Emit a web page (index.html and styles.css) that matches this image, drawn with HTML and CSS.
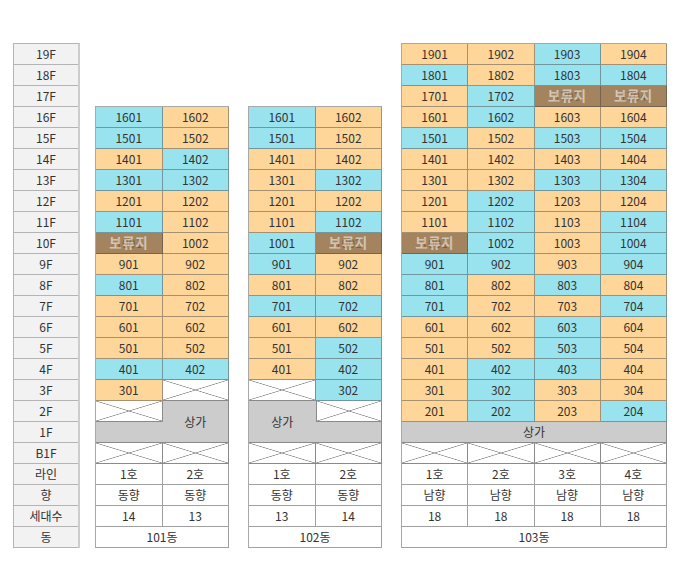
FILE: index.html
```html
<!DOCTYPE html>
<html lang="ko">
<head>
<meta charset="utf-8">
<title>동별 배치도</title>
<link rel="stylesheet" href="styles.css">
</head>
<body>
<div class="page">
  <div class="floors">
    <div class="f">19F</div><div class="f">18F</div><div class="f">17F</div><div class="f">16F</div>
    <div class="f">15F</div><div class="f">14F</div><div class="f">13F</div><div class="f">12F</div>
    <div class="f">11F</div><div class="f">10F</div><div class="f">9F</div><div class="f">8F</div>
    <div class="f">7F</div><div class="f">6F</div><div class="f">5F</div><div class="f">4F</div>
    <div class="f">3F</div><div class="f">2F</div><div class="f">1F</div><div class="f">B1F</div>
    <div class="f">라인</div><div class="f">향</div><div class="f">세대수</div><div class="f">동</div>
  </div>

  <div class="bldg cols2 b101">
    <div class="c">1601</div><div class="o">1602</div>
    <div class="c">1501</div><div class="o">1502</div>
    <div class="o">1401</div><div class="c">1402</div>
    <div class="c">1301</div><div class="c">1302</div>
    <div class="o">1201</div><div class="o">1202</div>
    <div class="c">1101</div><div class="o">1102</div>
    <div class="h">1001<span class="hold">보류지</span></div><div class="o">1002</div>
    <div class="o">901</div><div class="o">902</div>
    <div class="c">801</div><div class="o">802</div>
    <div class="o">701</div><div class="o">702</div>
    <div class="o">601</div><div class="o">602</div>
    <div class="o">501</div><div class="o">502</div>
    <div class="c">401</div><div class="c">402</div>
    <div class="o">301</div><div class="x"></div>
    <div class="x"></div><div class="g span-r2">상가</div>
    <div class="g no-right"></div>
    <div class="x"></div><div class="x"></div>
    <div class="i">1호</div><div class="i">2호</div>
    <div class="i">동향</div><div class="i">동향</div>
    <div class="i">14</div><div class="i">13</div>
    <div class="i span-c2">101동</div>
  </div>

  <div class="bldg cols2 b102">
    <div class="c">1601</div><div class="o">1602</div>
    <div class="c">1501</div><div class="o">1502</div>
    <div class="o">1401</div><div class="o">1402</div>
    <div class="o">1301</div><div class="c">1302</div>
    <div class="o">1201</div><div class="o">1202</div>
    <div class="o">1101</div><div class="c">1102</div>
    <div class="c">1001</div><div class="h">1002<span class="hold">보류지</span></div>
    <div class="c">901</div><div class="o">902</div>
    <div class="o">801</div><div class="o">802</div>
    <div class="c">701</div><div class="c">702</div>
    <div class="o">601</div><div class="o">602</div>
    <div class="o">501</div><div class="c">502</div>
    <div class="o">401</div><div class="c">402</div>
    <div class="x"></div><div class="c">302</div>
    <div class="g span-r2 no-right">상가</div><div class="x with-left"></div>
    <div class="g"></div>
    <div class="x"></div><div class="x"></div>
    <div class="i">1호</div><div class="i">2호</div>
    <div class="i">동향</div><div class="i">동향</div>
    <div class="i">13</div><div class="i">14</div>
    <div class="i span-c2">102동</div>
  </div>

  <div class="bldg cols4 b103">
    <div class="o">1901</div><div class="o">1902</div><div class="c">1903</div><div class="o">1904</div>
    <div class="c">1801</div><div class="o">1802</div><div class="c">1803</div><div class="c">1804</div>
    <div class="o">1701</div><div class="c">1702</div><div class="h">1703<span class="hold">보류지</span></div><div class="h">1704<span class="hold">보류지</span></div>
    <div class="o">1601</div><div class="c">1602</div><div class="o">1603</div><div class="o">1604</div>
    <div class="c">1501</div><div class="o">1502</div><div class="c">1503</div><div class="c">1504</div>
    <div class="o">1401</div><div class="o">1402</div><div class="o">1403</div><div class="o">1404</div>
    <div class="o">1301</div><div class="o">1302</div><div class="c">1303</div><div class="c">1304</div>
    <div class="o">1201</div><div class="c">1202</div><div class="o">1203</div><div class="o">1204</div>
    <div class="o">1101</div><div class="c">1102</div><div class="o">1103</div><div class="c">1104</div>
    <div class="h">1001<span class="hold">보류지</span></div><div class="c">1002</div><div class="o">1003</div><div class="c">1004</div>
    <div class="c">901</div><div class="c">902</div><div class="o">903</div><div class="c">904</div>
    <div class="c">801</div><div class="o">802</div><div class="c">803</div><div class="o">804</div>
    <div class="c">701</div><div class="o">702</div><div class="o">703</div><div class="c">704</div>
    <div class="o">601</div><div class="o">602</div><div class="c">603</div><div class="o">604</div>
    <div class="o">501</div><div class="o">502</div><div class="c">503</div><div class="o">504</div>
    <div class="o">401</div><div class="c">402</div><div class="c">403</div><div class="o">404</div>
    <div class="o">301</div><div class="c">302</div><div class="o">303</div><div class="o">304</div>
    <div class="o">201</div><div class="c">202</div><div class="o">203</div><div class="c">204</div>
    <div class="g span-c4">상가</div>
    <div class="x"></div><div class="x"></div><div class="x"></div><div class="x"></div>
    <div class="i">1호</div><div class="i">2호</div><div class="i">3호</div><div class="i">4호</div>
    <div class="i">남향</div><div class="i">남향</div><div class="i">남향</div><div class="i">남향</div>
    <div class="i">18</div><div class="i">18</div><div class="i">18</div><div class="i">18</div>
    <div class="i span-c4">103동</div>
  </div>
</div>
</body>
</html>
```

FILE: styles.css
```css
* { box-sizing: border-box; }

html, body {
  margin: 0;
  padding: 0;
  background: #ffffff;
}

body {
  font-family: "Noto Sans CJK KR", "Noto Sans", sans-serif;
  font-size: 12px;
  color: #333333;
}

.page {
  display: flex;
  align-items: flex-end;
  padding: 43px 0 0 13px;
}

.floors {
  width: 67px;
  margin-right: 15px;
  display: grid;
  grid-template-columns: 1fr;
  grid-auto-rows: 21px;
  border-top: 1px solid #b4b4b4;
  border-left: 1px solid #b4b4b4;
  border-right: 2px solid #cdcdcd;
}

.f {
  display: flex;
  align-items: center;
  justify-content: center;
  background: #f2f2f2;
  border-bottom: 1px solid #b4b4b4;
  line-height: 1;
}

.bldg {
  display: grid;
  grid-auto-rows: 21px;
  border-top: 1px solid #a8a8a8;
  border-left: 1px solid #a8a8a8;
}

.cols2 { grid-template-columns: 1fr 1fr; width: 134px; margin-right: 19px; }
.cols4 { grid-template-columns: 1fr 1fr 1fr 1fr; width: 266px; }

.bldg > div {
  position: relative;
  display: flex;
  align-items: center;
  justify-content: center;
  line-height: 1;
  border-right: 1px solid rgba(60, 60, 60, 0.45);
  border-bottom: 1px solid rgba(60, 60, 60, 0.45);
}

.bldg > .c { background: #99e3ef; }
.bldg > .o { background: #ffd699; }

.bldg > .h {
  background: #a3845f;
  color: rgba(40, 25, 10, 0.35);
}

.hold {
  position: absolute;
  inset: 0;
  display: flex;
  align-items: center;
  justify-content: center;
  font-size: 13.5px;
  font-weight: 700;
  letter-spacing: 0.5px;
  color: rgba(255, 255, 255, 0.55);
}

.bldg > .g {
  background: #cccccc;
  border-bottom-color: #8a8a8a;
  border-right-color: #8a8a8a;
}

.bldg > .x {
  background:
    linear-gradient(to top right, transparent calc(50% - 0.7px), #8c8c8c 50%, transparent calc(50% + 0.7px)),
    linear-gradient(to bottom right, transparent calc(50% - 0.7px), #8c8c8c 50%, transparent calc(50% + 0.7px)),
    #ffffff;
  border-bottom-color: #8a8a8a;
  border-right-color: #8a8a8a;
}

.bldg > .i {
  background: #ffffff;
  border-right-color: #a0a0a0;
  border-bottom-color: #a0a0a0;
}

.bldg > .no-right { border-right: none; }
.bldg > .with-left { border-left: 1px solid #8a8a8a; }

.span-r2 { grid-row: span 2; }
.span-c2 { grid-column: span 2; }
.span-c4 { grid-column: span 4; }
```
